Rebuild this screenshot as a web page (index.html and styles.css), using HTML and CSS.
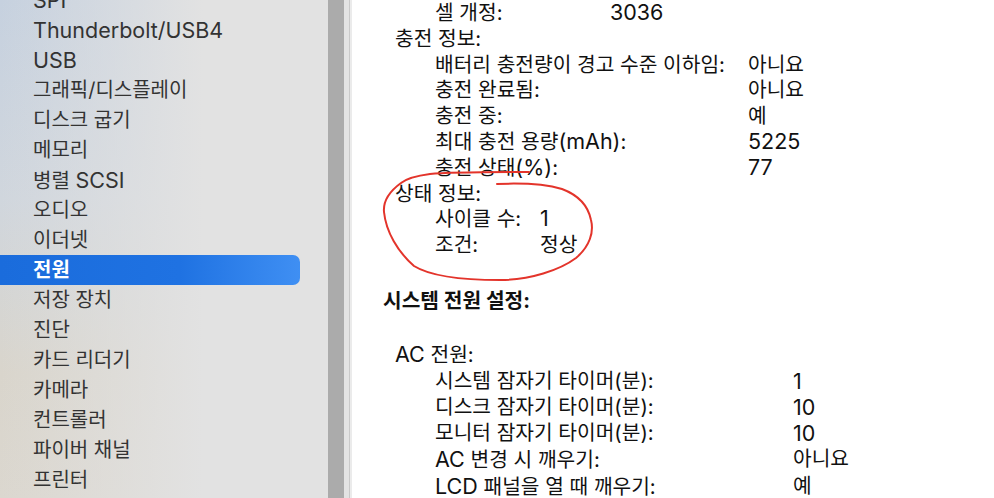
FILE: index.html
```html
<!DOCTYPE html>
<html lang="ko">
<head>
<meta charset="utf-8">
<title>시스템 정보 - 전원</title>
<link rel="stylesheet" href="styles.css">
</head>
<body>
<div class="window">
  <nav class="sidebar">
    <ul class="list">
      <li><span class="en">SPI</span></li>
      <li><span class="en">Thunderbolt/USB4</span></li>
      <li><span class="en">USB</span></li>
      <li>그래픽/디스플레이</li>
      <li>디스크 굽기</li>
      <li>메모리</li>
      <li>병렬 <span class="en">SCSI</span></li>
      <li>오디오</li>
      <li>이더넷</li>
      <li class="selected">전원</li>
      <li>저장 장치</li>
      <li>진단</li>
      <li>카드 리더기</li>
      <li>카메라</li>
      <li>컨트롤러</li>
      <li>파이버 채널</li>
      <li>프린터</li>
    </ul>
  </nav>
  <div class="scrollbar"></div>
  <div class="splitter"></div>
  <main class="content">
    <div class="grid w-cell">
      <span>셀 개정:</span><span class="en">3036</span>
    </div>
    <div class="head">충전 정보:</div>
    <div class="grid w-charge">
      <span>배터리 충전량이 경고 수준 이하임:</span><span>아니요</span>
      <span>충전 완료됨:</span><span>아니요</span>
      <span>충전 중:</span><span>예</span>
      <span>최대 충전 용량<span class="en">(mAh)</span>:</span><span class="en">5225</span>
      <span>충전 상태<span class="en">(%)</span>:</span><span class="en">77</span>
    </div>
    <div class="head">상태 정보:</div>
    <div class="grid w-health">
      <span>사이클 수:</span><span class="en">1</span>
      <span>조건:</span><span>정상</span>
    </div>
    <h2 class="title">시스템 전원 설정:</h2>
    <div class="head ac">
      <span class="en">AC</span> 전원:
    </div>
    <div class="grid w-ac">
      <span>시스템 잠자기 타이머(분):</span><span class="en">1</span>
      <span>디스크 잠자기 타이머(분):</span><span class="en">10</span>
      <span>모니터 잠자기 타이머(분):</span><span class="en">10</span>
      <span><span class="en">AC</span> 변경 시 깨우기:</span><span>아니요</span>
      <span><span class="en">LCD</span> 패널을 열 때 깨우기:</span><span>예</span>
    </div>
  </main>
</div>
<svg class="annotation" viewBox="0 0 994 498" width="994" height="498" aria-hidden="true">
  <path d="M 529 172 C 490 172, 450 172, 430 174 C 415 176, 406 179, 401 183 C 390 191, 383 201, 384 212 C 386 232, 398 252, 414 266 C 430 276, 460 280, 500 280 C 530 280, 560 270, 576 258 C 590 246, 594 232, 591 220 C 588 205, 578 195, 562 189 C 545 184, 520 183, 497 184" fill="none" stroke="#e3342b" stroke-width="2" stroke-linecap="round"/>
</svg>
</body>
</html>
```

FILE: styles.css
```css
html, body {
  margin: 0;
  padding: 0;
  width: 994px;
  height: 498px;
  overflow: hidden;
  background: #ffffff;
}

body {
  font-family: "Inter", "Noto Sans CJK KR", sans-serif;
  position: relative;
}

.window {
  display: flex;
  height: 498px;
}

.en {
  font-family: "Inter", "Noto Sans CJK KR", sans-serif;
  font-size: 21.5px;
}

/* Sidebar */
.sidebar {
  width: 328px;
  flex: none;
  overflow: hidden;
  background:
    linear-gradient(90deg, rgba(226,226,226,0) 0%, rgba(226,226,226,0.55) 35%, #e2e2e2 62%),
    linear-gradient(180deg, #c6d1df 0%, #d0d6dd 40%, #d9d5cc 75%, #dbd7cf 100%);
}

.list {
  list-style: none;
  margin: -15px 0 0 0;
  padding: 0;
}

.list li {
  height: 30px;
  line-height: 30px;
  padding-left: 33px;
  font-size: 20px;
  color: #333333;
  width: 300px;
  box-sizing: border-box;
  white-space: nowrap;
}

.list li.selected {
  background: linear-gradient(90deg, #1a6cdc 0%, #1f72e2 60%, #3f8ff3 100%);
  color: #ffffff;
  font-weight: 700;
  border-radius: 0 7px 7px 0;
}

.scrollbar {
  width: 16px;
  flex: none;
  background: #ababab;
}

.splitter {
  width: 5px;
  flex: none;
  background: #e3e3e3;
  border-right: 1px solid #c9c9c9;
  margin-right: 2px;
  box-shadow: 2px 0 0 #ebebeb;
}

/* Content */
.content {
  flex: 1;
  padding-left: 31px;
  color: #111111;
  font-size: 20.3px;
  line-height: 25.8px;
  white-space: nowrap;
}

.head {
  padding-left: 12px;
}

.grid {
  display: grid;
  padding-left: 52px;
}

.w-cell { grid-template-columns: 175px auto; }
.w-charge { grid-template-columns: 313px auto; }
.w-health { grid-template-columns: 105px auto; }
.w-ac { grid-template-columns: 358px auto; line-height: 26px; }

.title {
  margin: 30px 0 0 0;
  font-size: 20.3px;
  line-height: 25.8px;
  font-weight: 700;
}

.head.ac {
  margin-top: 27px;
  line-height: 26px;
}

.annotation {
  position: absolute;
  left: 0;
  top: 0;
  pointer-events: none;
}
```
